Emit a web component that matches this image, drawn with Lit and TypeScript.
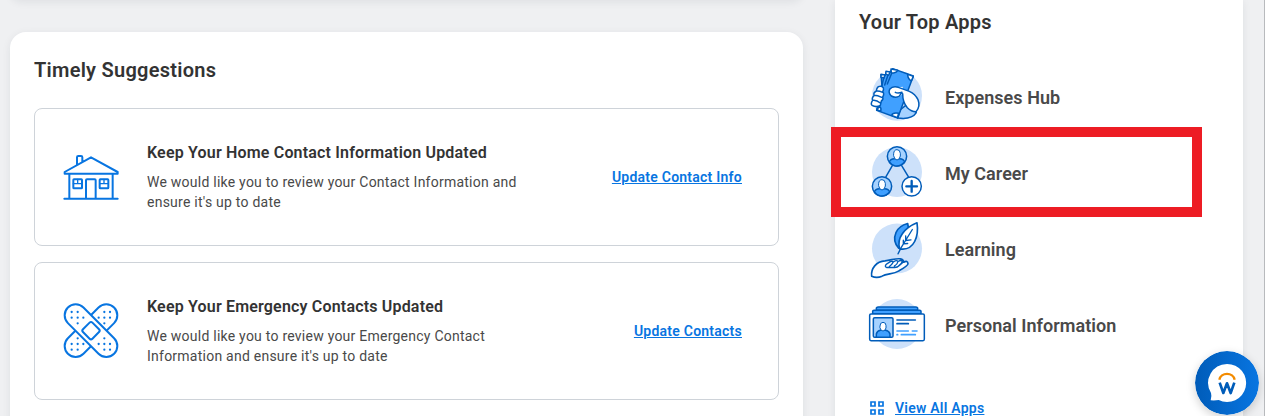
import { LitElement, html, css, svg } from "lit";
import { customElement } from "lit/decorators.js";

const house = html`<svg viewBox="30 21 186 180" width="62" height="60" fill="none" stroke="#0875e1" stroke-width="6" stroke-linejoin="round" stroke-linecap="round">
  <path d="M43 176H203M58 102V175M188 102V175M44 96L123 52L203 96V101H44ZM81 74V52Q81 48 85 48H93Q97 48 97 52V65M108 175V121Q108 118 111 118H134Q137 118 137 121V175"/>
  <rect x="70" y="118" width="26" height="27" rx="2"/><rect x="149" y="118" width="26" height="27" rx="2"/>
  <path d="M70 131H96M83 118V131M149 131H175M162 118V131" stroke-width="4"/></svg>`;

const dots = [[64, 82], [82, 65], [82, 82], [99, 82], [64, 65], [82, 99], [145, 82], [162, 65], [162, 82], [179, 82], [179, 65], [162, 99],
  [64, 161], [82, 144], [82, 161], [99, 161], [64, 178], [82, 178], [145, 161], [162, 144], [162, 161], [179, 161], [162, 178], [179, 178]];
const bandage = html`<svg viewBox="29 29 186 186" width="62" height="62" fill="#fff" stroke="#0875e1" stroke-width="6" stroke-linejoin="round">
  <rect x="24" y="88" width="196" height="66" rx="33" transform="rotate(-45 122 121)"/>
  <rect x="24" y="88" width="196" height="66" rx="33" transform="rotate(45 122 121)"/>
  <rect x="102" y="101" width="40" height="40" rx="6" transform="rotate(45 122 121)"/>
  <g fill="#0875e1" stroke="none">${dots.map(([x, y]) => svg`<circle cx=${x} cy=${y} r="3.4"/>`)}</g></svg>`;

const expenses = html`<svg viewBox="24 24 174 174" width="58" height="58" fill="#fff" stroke="#005cb9" stroke-width="4.5" stroke-linejoin="round" stroke-linecap="round">
  <circle cx="111" cy="107" r="75" fill="#cde1fa" stroke="none"/>
  <path fill="#a6d2ff" d="M113 174Q155 180 169 158L145 130L120 150Z"/>
  <path fill="#40a0ff" d="M63 43L76 45L79 36L90 35L98 26L160 48L113 174L50 151L66 78Z"/>
  <path d="M65 80L73 46M74 75L86 39M82 72L99 30" fill="none"/>
  <path d="M63 44L75 44L72 54L63 52ZM78 34L90 36L86 46L77 42ZM93 27L113 31Q109 41 94 38ZM143 43L160 49L154 63Q143 57 143 43ZM95 166Q98 157 116 160L112 173ZM50 148L59 140Q65 144 62 154Z"/>
  <path d="M55 80Q64 76 70 83Q72 90 68 95Q74 101 68 111Q71 119 64 123L61 136Q49 143 36 136Q31 131 38 121Q34 114 43 106Q38 99 49 93Q49 85 55 80ZM49 93Q57 92 68 97M42 106Q52 106 67 113M38 121Q49 119 61 129"/>
  <path stroke="none" d="M92 86L128 80L128 101L116 112Q96 112 88 98Z"/>
  <path d="M128 101Q128 127 142 143Q154 155 168 155Q182 139 174 119Q166 102 148 94L115 82Q98 77 89 88Q84 98 94 108Q106 115 117 109L126 97Q113 101 106 97"/></svg>`;

const person = (x: number, y: number) => svg`<g transform="translate(${x} ${y})"><circle r="29" fill="#a6d2ff"/><path fill="#40a0ff" d="M-23 17Q-20 7 -8 7H8Q20 7 23 17Q10 32 -7 28Q-18 25 -23 17Z"/><path d="M-10 -9Q-9 -20 0 -20Q9 -20 10 -9V-1Q8 10 0 11Q-8 10 -10 -1Z" fill="#fff" stroke-width="3"/></g>`;
const career = html`<svg viewBox="24 12 174 174" width="58" height="58" fill="#fff" stroke="#005cb9" stroke-width="4.5" stroke-linejoin="round" stroke-linecap="round">
  <circle cx="111" cy="96" r="75" fill="#cde1fa" stroke="none"/><path fill="none" d="M97 77L78 110M125 77L145 110"/>
  ${person(111, 49)}${person(66, 139)}<circle cx="155" cy="139" r="29"/><path d="M155 123V155M139 139H171" stroke-width="7"/></svg>`;

const learning = html`<svg viewBox="24 10.5 174 183" width="58" height="61" fill="none" stroke="#005cb9" stroke-width="5" stroke-linejoin="round" stroke-linecap="round">
  <circle cx="111" cy="99" r="75" fill="#cde1fa" stroke="none"/>
  <path fill="#40a0ff" d="M116 98Q97 77 108 51Q117 31 143 24Q144 37 150 41L125 97Z"/>
  <path fill="#fff" d="M119 100Q112 76 127 55Q141 34 171 22Q176 54 164 78Q150 105 119 100Z"/>
  <path d="M114 115L123 97L157 42M137 61L137 75L153 73M130 74V85L143 84" stroke-width="4"/>
  <path fill="#fff" d="M35 182C32 160 49 137 75 136C94 134 108 128 121 130Q131 132 131 140Q143 133 144 145C144 151 124 162 117 166C99 178 81 172 66 182Q50 189 35 182Z"/>
  <path d="M78 155Q72 150 84 143Q94 134 99 139Q99 145 88 153M99 140Q110 132 114 138Q113 145 103 152M114 138Q125 132 127 138Q125 145 116 151M131 139L119 149Q112 156 104 156H80" stroke-width="4"/></svg>`;

const identity = html`<svg viewBox="24 18 174 165" width="58" height="55" fill="#fff" stroke="#005cb9" stroke-width="4.5" stroke-linejoin="round" stroke-linecap="round">
  <circle cx="111" cy="96" r="75" fill="#cde1fa" stroke="none"/>
  <path fill="#40a0ff" d="M49 54V48Q50 45 54 45H168Q172 45 173 48V54ZM38 65V58Q38 55 42 55H179Q183 55 183 58V65Z"/>
  <rect x="29" y="66" width="164" height="80" rx="4"/><rect x="40" y="77" width="59" height="59" rx="4" fill="#a6d2ff"/>
  <path fill="#40a0ff" d="M49 136V126Q51 117 61 115H77Q87 117 90 126V136Z"/><path d="M60 101Q60 91 69 91Q78 91 78 101V108Q75 117 69 117Q62 117 60 108Z" stroke-width="3"/>
  <path d="M111 84H166M111 95H145" stroke-width="5"/><path d="M111 117H145M157 117H171M111 128H113M124 128H166" stroke="#40a0ff" stroke-width="5"/></svg>`;

@customElement("app-root")
export class AppRoot extends LitElement {
  static styles = css`
    :host { display: block; position: relative; width: 1265px; height: 416px; overflow: hidden; background: #eff0f2; font-family: Roboto, sans-serif; color: #333; }
    * { box-sizing: border-box; }
    svg { display: block; flex: none; }
    .page { display: flex; align-items: flex-start; gap: 32px; padding-left: 10px; }
    .main { width: 793px; }
    .card { background: #fff; border-radius: 16px; box-shadow: 0 2px 8px rgba(31,38,46,.08); }
    .previous { height: 24px; margin: -24px 0 32px; }
    .suggestions { height: 420px; padding: 24px; }
    h2 { margin: 0; font-size: 20px; line-height: 28px; font-weight: 600; letter-spacing: .26px; }
    .item { display: flex; align-items: center; height: 138px; border: 1px solid #ced3d9; border-radius: 8px; padding: 0 36px 0 25px; margin-bottom: 16px; }
    .suggestions h2 { margin-bottom: 24px; }
    .copy { width: 390px; margin-left: 25px; }
    h3 { margin: 0 0 7px; font-size: 16px; line-height: 24px; font-weight: 600; letter-spacing: .18px; white-space: nowrap; }
    p { margin: 0; padding-bottom: 1px; font-size: 14px; line-height: 20px; letter-spacing: .24px; color: #494949; white-space: nowrap; }
    .link { color: #0875e1; font-size: 14px; line-height: 20px; font-weight: 600; letter-spacing: .24px; text-decoration: underline; white-space: nowrap; }
    .item .link { margin-left: auto; }
    .apps { width: 408px; height: 440px; padding: 8px 24px; border-radius: 0; }
    .apps h2 { letter-spacing: .2px; }
    .list { padding: 23px 0 0 9px; }
    .app { display: flex; align-items: center; height: 76px; gap: 19px; font-size: 18px; font-weight: 600; letter-spacing: .04px; color: #494949; }
    .art { width: 58px; display: flex; justify-content: center; }
    .all { display: flex; align-items: center; gap: 11px; margin: 35px 0 0 11px; }
    .highlight { position: absolute; left: 831px; top: 127px; width: 371px; height: 90px; border: 10px solid #ed1c24; }
    .assistant { position: absolute; left: 1195px; top: 351px; width: 64px; height: 64px; border-radius: 50%; box-shadow: 0 3px 10px rgba(0,0,0,.18); }
    .edge { position: absolute; right: 0; top: 0; width: 1px; height: 100%; background: #b8babd; }
  `;
  suggestion(icon: unknown, title: string, first: string, second: string, action: string) {
    return html`<article class="item">${icon}<div class="copy"><h3>${title}</h3><p>${first}<br>${second}</p></div><a class="link">${action}</a></article>`;
  }
  render() {
    return html`<div class="page"><main class="main"><div class="card previous"></div><section class="card suggestions"><h2>Timely Suggestions</h2>
      ${this.suggestion(house, "Keep Your Home Contact Information Updated", "We would like you to review your Contact Information and", "ensure it's up to date", "Update Contact Info")}
      ${this.suggestion(bandage, "Keep Your Emergency Contacts Updated", "We would like you to review your Emergency Contact", "Information and ensure it's up to date", "Update Contacts")}
    </section></main>
    <aside class="card apps"><h2>Your Top Apps</h2><div class="list">
      ${[[expenses, "Expenses Hub"], [career, "My Career"], [learning, "Learning"], [identity, "Personal Information"]].map(([icon, name]) => html`<div class="app"><div class="art">${icon}</div><span>${name}</span></div>`)}
    </div><div class="all"><svg width="14" height="14" fill="none" stroke="#0875e1" stroke-width="1.7"><path d="M1 1H5V5H1ZM9 1H13V5H9ZM1 9H5V13H1ZM9 9H13V13H9Z"/></svg><a class="link">View All Apps</a></div></aside></div>
    <div class="edge"></div><div class="highlight"></div>
    <svg class="assistant" viewBox="30 33 192 192"><defs><linearGradient id="blue"><stop stop-color="#005cb9"/><stop offset="1" stop-color="#0875e1"/></linearGradient></defs><circle cx="126" cy="129" r="96" fill="url(#blue)"/><path fill="#fff" d="M126 72A57 57 0 1 1 101 180Q91 182 77 181Q81 168 78 159A57 57 0 0 1 126 72Z"/><path d="M103 119A23.5 22 0 0 1 149 119" fill="none" stroke="#f38b00" stroke-width="7"/><path d="M104 128L115 159L126 130L137 159L148 128" fill="none" stroke="#005cb9" stroke-width="8" stroke-linejoin="round"/></svg>`;
  }
}
